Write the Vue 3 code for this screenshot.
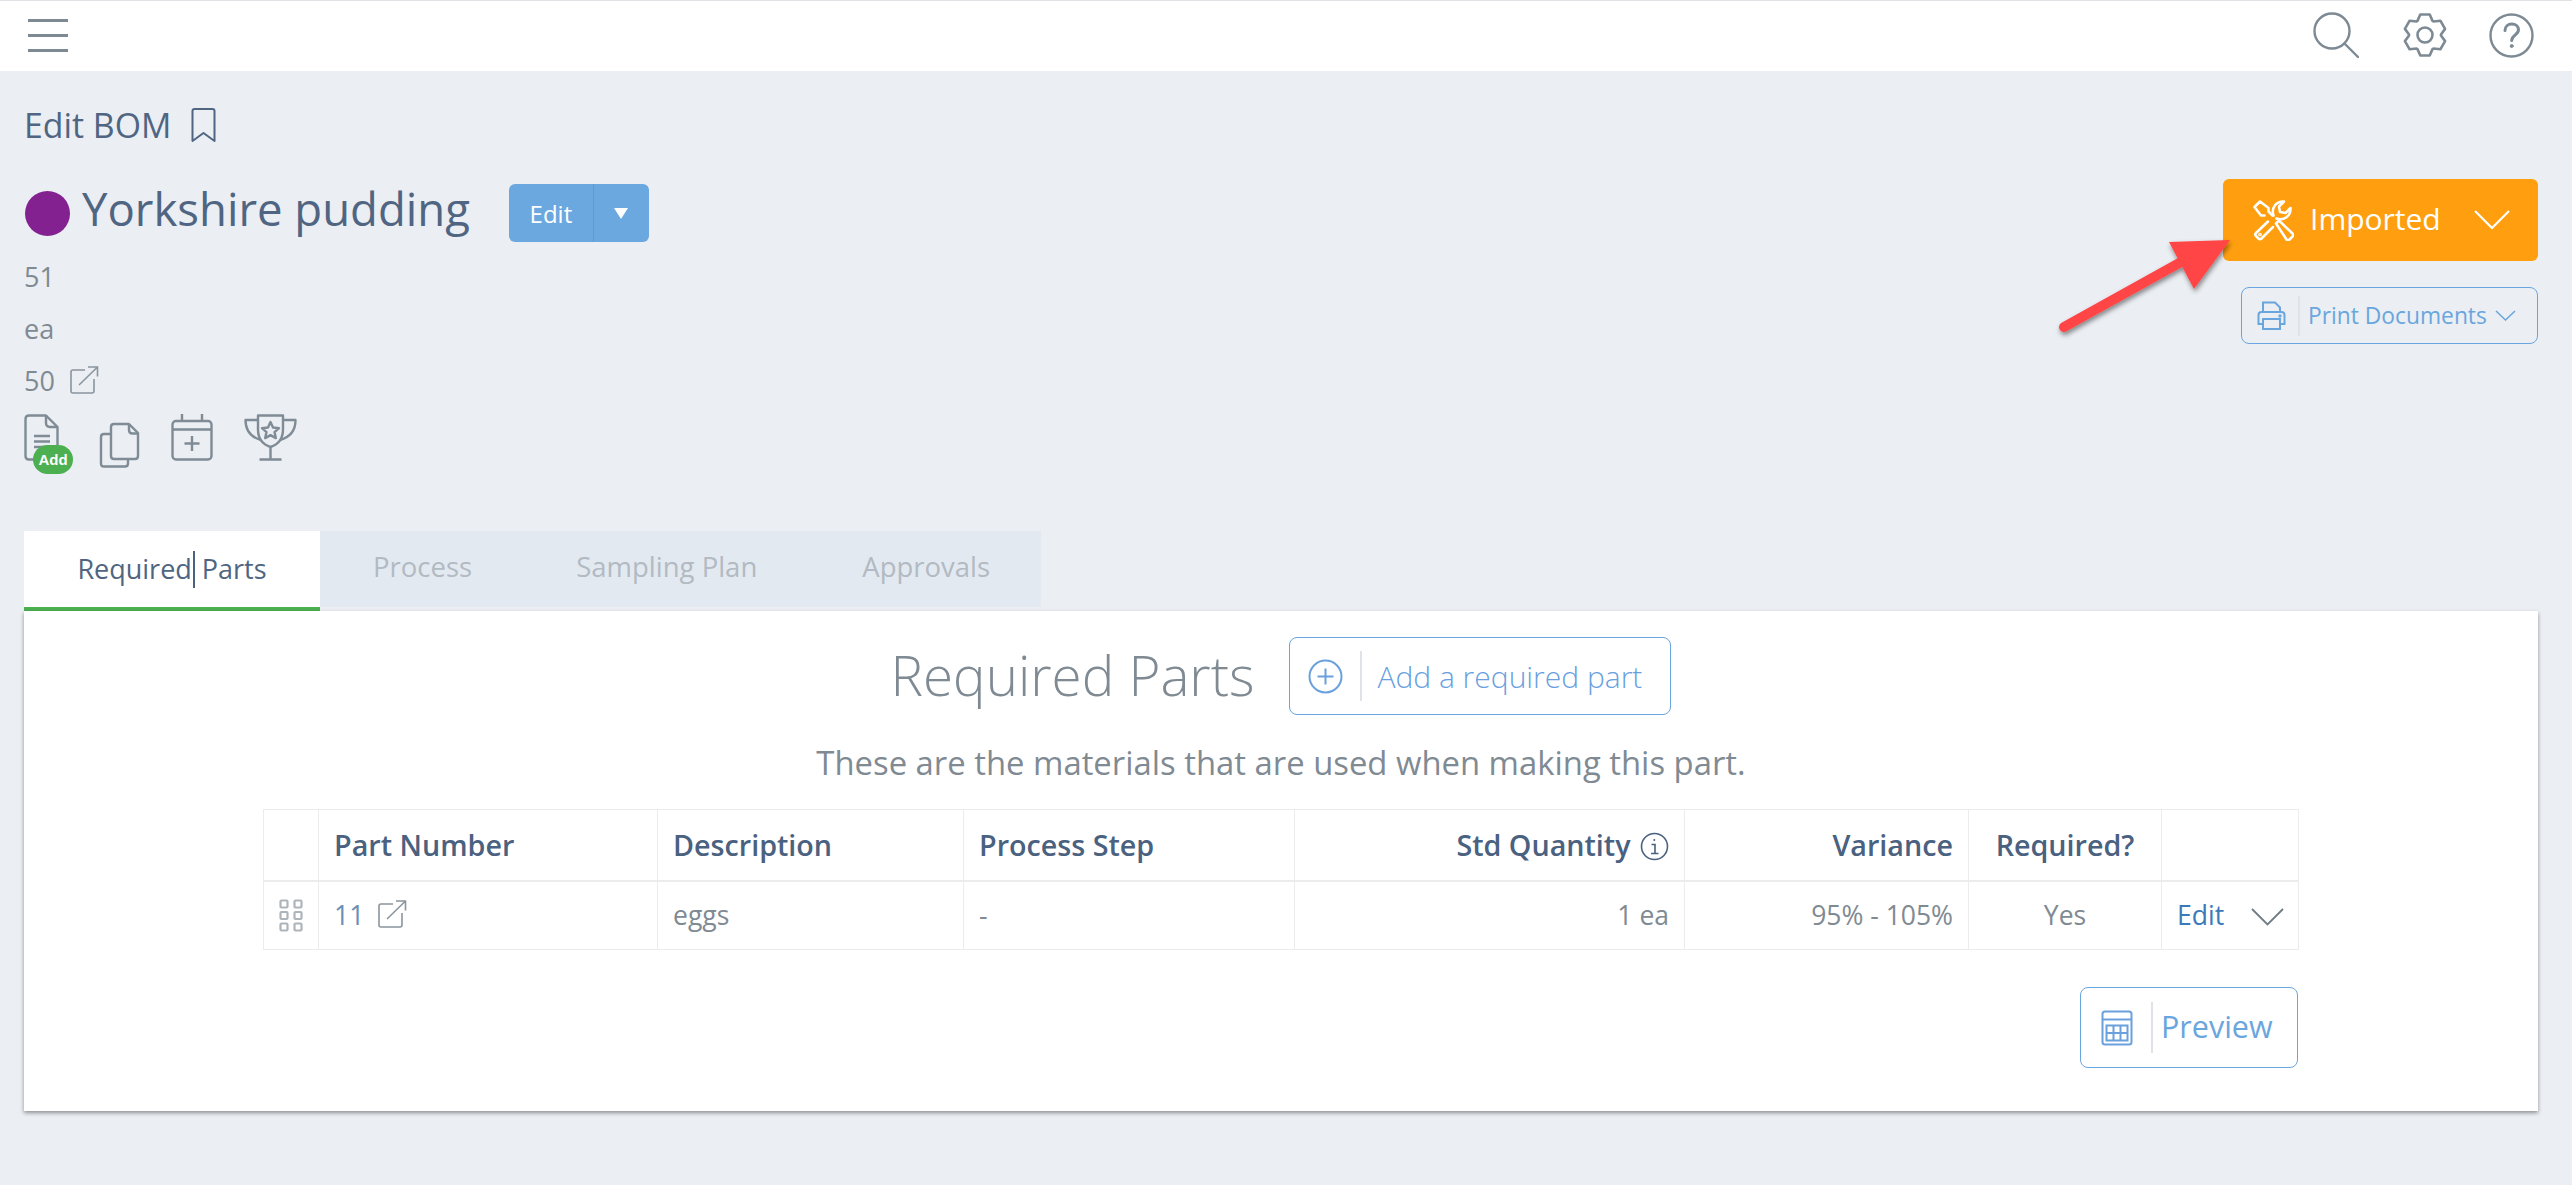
<script setup>
const gear = (() => {
  const c = 22, pts = []
  for (let i = 0; i < 6; i++) {
    const a = (i * 60 - 90) * Math.PI / 180
    const p = (r, d) => {
      const t = a + d * Math.PI / 180
      return `${(c + r * Math.cos(t)).toFixed(2)} ${(c + r * Math.sin(t)).toFixed(2)}`
    }
    pts.push(p(16, -28), p(21, -13), p(21, 13), p(16, 28))
  }
  return 'M' + pts.join('L') + 'Z'
})()
const headers = [
  { text: 'Part Number', cls: '' },
  { text: 'Description', cls: '' },
  { text: 'Process Step', cls: '' }
]
</script>

<template>
  <div class="page">
    <header class="topbar">
      <div class="burger"><span></span><span></span><span></span></div>
      <div class="top-icons">
        <svg class="ti" width="46" height="46" viewBox="0 0 46 46" fill="none" stroke="#7d8a94" stroke-width="2.4" stroke-linecap="round">
          <circle cx="19" cy="19" r="17.5" />
          <path d="M31.5 31.5L45 45" />
        </svg>
        <svg class="ti" width="44" height="44" viewBox="0 0 44 44" fill="none" stroke="#7d8a94" stroke-width="2.6" stroke-linejoin="round">
          <path :d="gear" />
          <circle cx="22" cy="22" r="7.5" />
        </svg>
        <svg class="ti" width="45" height="45" viewBox="0 0 45 45" fill="none" stroke="#7d8a94" stroke-width="2.4" stroke-linecap="round">
          <circle cx="22.5" cy="22.5" r="21" />
          <path d="M16 17.5c0-4 3-6.500 6.800-6.500 3.800 0 6.700 2.400 6.700 5.800 0 5-6.800 5.200-6.800 10.700" stroke-width="3" />
          <circle cx="22.700" cy="33" r="1.500" fill="#7d8a94" stroke-width="1" />
        </svg>
      </div>
    </header>

    <section class="top">
      <div class="left">
        <div class="crumb">
          <span>Edit BOM</span>
          <svg width="25" height="35" viewBox="0 0 25 35" fill="none" stroke="#4f6582" stroke-width="2">
            <path d="M1.500 33V3q0-2 2-2h18q2 0 2 2v30l-11-8z" stroke-linejoin="round" />
          </svg>
        </div>
        <div class="title-row">
          <span class="dot"></span>
          <h1>Yorkshire pudding</h1>
          <div class="split">
            <span class="split-main">Edit</span>
            <span class="split-caret"><i></i></span>
          </div>
        </div>
        <div class="meta first">51</div>
        <div class="meta">ea</div>
        <div class="meta">
          50
          <svg class="ext" width="29" height="28" viewBox="0 0 29 28" fill="none" stroke="#8a959e" stroke-width="1.600">
            <path d="M15 4H3q-2 0-2 2v19q0 2 2 2h19q2 0 2-2V13" />
            <path d="M9 19L27.500 1M18 1h9.500v9.500" />
          </svg>
        </div>
        <div class="actions">
          <div class="doc-wrap">
            <svg width="36" height="47" viewBox="0 0 36 47" fill="none" stroke="#7f8b95" stroke-width="2.400" stroke-linejoin="round">
              <path d="M22 1.500H5q-3.500 0-3.500 3.500v37q0 3.500 3.500 3.500h25q3.500 0 3.500-3.500V13z" />
              <path d="M22 1.500V9q0 4 4 4h7.500" />
              <path d="M10 22h16M10 27.500h16M10 33h16" />
            </svg>
            <span class="add">Add</span>
          </div>
          <svg class="copy" width="42" height="46" viewBox="0 0 42 46" fill="none" stroke="#7f8b95" stroke-width="2.400" stroke-linejoin="round">
            <path d="M29 37v4.500q0 3-3 3H5q-3 0-3-3V15q0-3 3-3h7" />
            <path d="M30 2H15q-3 0-3 3v29q0 3 3 3h21q3 0 3-3V11z" />
            <path d="M30 2v6q0 3.500 3.500 3.500H39" />
          </svg>
          <svg class="cal" width="42" height="47" viewBox="0 0 42 47" fill="none" stroke="#7f8b95" stroke-width="2.400" stroke-linejoin="round">
            <rect x="1.500" y="7" width="39" height="38.500" rx="3.500" />
            <path d="M1.500 15.500h39M11 0v7M31 0v7M21 22v15M13.500 29.500h15" />
          </svg>
          <svg class="trophy" width="53" height="47" viewBox="0 0 53 47" fill="none" stroke="#7f8b95" stroke-width="2.400" stroke-linejoin="round">
            <path d="M14 1.500h25v14c0 9-5 15-12.500 17.500C19 30.500 14 24.500 14 15.500z" />
            <path d="M14 6H1.500c0 11 5 17 15.500 20M39 6h12.500c0 11-5 17-15.500 20" />
            <path d="M26.500 33v13M15.500 45.500h22" />
            <path d="M26.500 8l2.500 5.500 6 .6-4.500 4 1.300 6-5.300-3-5.300 3 1.300-6-4.500-4 6-.6z" />
          </svg>
        </div>
      </div>

      <div class="right">
        <button class="status">
          <svg width="41" height="41" viewBox="0 0 41 41" fill="none" stroke="#fff" stroke-width="2.500" stroke-linejoin="round" stroke-linecap="round">
            <path d="M1.500 7L7 1.500l8.500 6.500v3.500l4 4M11.500 15.500H8L1.500 7" />
            <path d="M23 23.500l3-3 13.500 13q1.500 1.500 0 3l-3 3q-1.500 1.500-3 0z" />
            <path d="M15 21.500L3 33q-1.500 1.500 0 3l2.500 2.500q1.500 1.500 3 0L20 27" />
            <path d="M20.500 15.500C18 8 23 1 31 1.500l-5 5 1 5.500 5.500 1 5-5c.5 8-6.500 13-14 10.500" />
            <circle cx="7" cy="34.500" r=".6" fill="#fff" />
          </svg>
          <span class="status-text">Imported</span>
          <svg class="status-chev" width="36" height="20" viewBox="0 0 36 20" fill="none" stroke="#fff" stroke-width="2.200">
            <path d="M1 1l17 17L35 1" />
          </svg>
        </button>
        <button class="outline print">
          <svg width="29" height="29" viewBox="0 0 29 29" fill="none" stroke="#6aa6de" stroke-width="2">
            <path d="M6 12V1.500h12l5 5V12" />
            <path d="M6 23H1.500V14q0-3 3-3h20q3 0 3 3v9H23" />
            <path d="M6 18h17v10H6z" />
            <circle cx="23" cy="15" r=".7" fill="#6aa6de" />
          </svg>
          <span class="sep"></span>
          <span>Print Documents</span>
          <svg class="print-chev" width="21" height="11" viewBox="0 0 21 11" fill="none" stroke="#6aa6de" stroke-width="1.500">
            <path d="M1 1l9.500 9L20 1" />
          </svg>
        </button>
      </div>
    </section>

    <nav class="tabs">
      <div class="tab active">Required<i class="caret"></i> Parts</div>
      <div class="rest">
        <span class="t1">Process</span>
        <span class="t2">Sampling Plan</span>
        <span class="t3">Approvals</span>
      </div>
    </nav>

    <main class="card">
      <div class="card-head">
        <h2>Required Parts</h2>
        <button class="outline addpart">
          <svg width="35" height="35" viewBox="0 0 35 35" fill="none" stroke="#6aa0dc" stroke-width="2">
            <circle cx="17.500" cy="17.500" r="16" />
            <path d="M17.500 9.500v16M9.500 17.500h16" />
          </svg>
          <span class="sep"></span>
          <span>Add a required part</span>
        </button>
      </div>
      <p class="sub">These are the materials that are used when making this part.</p>

      <table class="grid">
        <colgroup>
          <col style="width:55px" />
          <col style="width:339px" />
          <col style="width:306px" />
          <col style="width:331px" />
          <col style="width:390px" />
          <col style="width:284px" />
          <col style="width:193px" />
          <col style="width:137px" />
        </colgroup>
        <thead>
          <tr>
            <th></th>
            <th v-for="h in headers" :key="h.text">{{ h.text }}</th>
            <th class="r">
              Std Quantity
              <svg class="info" width="29" height="29" viewBox="0 0 29 29" fill="none" stroke="#4a6180" stroke-width="1.600">
                <circle cx="14.500" cy="14.500" r="13" />
                <path d="M11.500 12.500h3.500v9M11 21.500h7.500" />
                <circle cx="14.300" cy="8" r="1" fill="#4a6180" stroke="none" />
              </svg>
            </th>
            <th class="r">Variance</th>
            <th class="c">Required?</th>
            <th></th>
          </tr>
        </thead>
        <tbody>
          <tr>
            <td class="drag">
              <svg width="24" height="33" viewBox="0 0 24 33" fill="none" stroke="#aeb5ba" stroke-width="2.200">
                <rect x="1.500" y="1.500" width="7" height="7" rx="1" />
                <rect x="15.500" y="1.500" width="7" height="7" rx="1" />
                <rect x="1.500" y="13" width="7" height="7" rx="1" />
                <rect x="15.500" y="13" width="7" height="7" rx="1" />
                <rect x="1.500" y="24.500" width="7" height="7" rx="1" />
                <rect x="15.500" y="24.500" width="7" height="7" rx="1" />
              </svg>
            </td>
            <td>
              <span class="num">11</span>
              <svg class="ext" width="29" height="28" viewBox="0 0 29 28" fill="none" stroke="#8a959e" stroke-width="1.600">
                <path d="M15 4H3q-2 0-2 2v19q0 2 2 2h19q2 0 2-2V13" />
                <path d="M9 19L27.500 1M18 1h9.500v9.500" />
              </svg>
            </td>
            <td>eggs</td>
            <td>-</td>
            <td class="r">1 ea</td>
            <td class="r">95% - 105%</td>
            <td class="c">Yes</td>
            <td class="edit">
              <a>Edit</a>
              <svg width="33" height="18" viewBox="0 0 33 18" fill="none" stroke="#6f7b85" stroke-width="1.800">
                <path d="M1 1l15.500 15.500L32 1" />
              </svg>
            </td>
          </tr>
        </tbody>
      </table>

      <div class="foot">
        <button class="outline preview">
          <svg width="32" height="36" viewBox="0 0 32 36" fill="none" stroke="#6aa0dc" stroke-width="2">
            <rect x="1.500" y="1.500" width="29" height="33" rx="2.500" />
            <path d="M1.500 9.500h29" />
            <path d="M5.500 15.500h21v15h-21zM5.500 23h21M12.500 15.500v15M19.500 15.500v15" />
          </svg>
          <span class="sep"></span>
          <span>Preview</span>
        </button>
      </div>
    </main>

    <svg class="arrow" width="190" height="110" viewBox="2055 230 190 110">
      <defs>
        <filter id="as" x="-20%" y="-20%" width="140%" height="150%">
          <feDropShadow dx="1" dy="3" stdDeviation="2.500" flood-color="#000" flood-opacity=".45" />
        </filter>
      </defs>
      <g filter="url(#as)" fill="#ff4444" stroke="none">
        <path d="M2064 327L2181 262" stroke="#ff4444" stroke-width="10" stroke-linecap="round" />
        <path d="M2169 242L2230 240L2194 289Z" />
      </g>
    </svg>
  </div>
</template>

<style scoped>
.page {
  position: relative;
  min-height: 1185px;
  background: #ebeef3;
  font-family: "Open Sans", "Noto Sans", sans-serif;
  color: #7f8a93;
  overflow: hidden;
}
.topbar {
  height: 71px;
  box-sizing: border-box;
  border-top: 1px solid #dfe1e4;
  background: #fff;
  display: flex;
  align-items: center;
  justify-content: space-between;
  padding: 0 38px 0 28px;
}
.burger {
  width: 40px;
  display: flex;
  flex-direction: column;
  gap: 12px;
  margin-top: -2px;
}
.burger span {
  height: 3px;
  background: #7d8a94;
}
.top-icons {
  display: flex;
  align-items: center;
  gap: 42px;
  margin-top: -2px;
}
.ti:first-child { margin-right: 2px; }
.top {
  display: flex;
  justify-content: space-between;
  height: 460px;
  padding: 0 34px 0 24px;
}
.crumb {
  height: 40px;
  margin-top: 34px;
  display: flex;
  align-items: center;
  gap: 20px;
  font-size: 33.800px;
  line-height: 40px;
  font-weight: 400;
  color: #4f6582;
}
.title-row {
  display: flex;
  align-items: center;
  height: 58px;
  margin-top: 39px;
  margin-left: 1px;
}
.dot {
  width: 45px;
  height: 45px;
  border-radius: 50%;
  background: #832191;
}
h1 {
  margin: -10px 0 0 12px;
  font-size: 45.500px;
  line-height: 58px;
  font-weight: 400;
  color: #4f6582;
}
.split {
  display: flex;
  width: 140px;
  height: 58px;
  margin-left: 39px;
  border-radius: 6px;
  overflow: hidden;
  background: #6ca8e0;
  color: #fff;
  font-size: 24px;
}
.split-main {
  width: 84px;
  display: flex;
  align-items: center;
  justify-content: center;
  border-right: 1px solid #5f9cd6;
}
.split-caret {
  flex: 1;
  display: flex;
  align-items: center;
  justify-content: center;
}
.split-caret i {
  width: 0;
  height: 0;
  border-left: 7px solid transparent;
  border-right: 7px solid transparent;
  border-top: 11px solid #fff;
}
.meta {
  height: 52px;
  display: flex;
  align-items: center;
  gap: 15px;
  font-size: 27px;
  font-weight: 400;
  color: #7f8a93;
}
.meta.first {
  margin-top: 8px;
}
.actions {
  display: flex;
  align-items: flex-start;
  margin-top: 8px;
}
.doc-wrap {
  position: relative;
  width: 36px;
  height: 47px;
}
.add {
  position: absolute;
  left: 9px;
  top: 31px;
  width: 40px;
  height: 29px;
  border-radius: 15px;
  background: #4caf50;
  color: #fff;
  font-family: "Liberation Sans", sans-serif;
  font-size: 15px;
  font-weight: 700;
  line-height: 29px;
  text-align: center;
}
.copy { margin: 8px 0 0 39px; }
.cal { margin-left: 30px; }
.trophy { margin-left: 31px; }
.right {
  display: flex;
  flex-direction: column;
  align-items: flex-end;
  padding-top: 108px;
  gap: 26px;
}
button {
  font-family: inherit;
  cursor: pointer;
}
.status {
  width: 315px;
  height: 82px;
  border: 0;
  border-radius: 6px;
  background: #ff9f10;
  color: #fff;
  display: flex;
  align-items: center;
  padding: 0 0 0 30px;
}
.status-text {
  margin: -4px 0 0 16px;
  font-size: 30px;
  font-weight: 400;
}
.status-chev { margin-left: 33px; }
.outline {
  display: flex;
  align-items: center;
  box-sizing: border-box;
  border: 1.500px solid #6aa6de;
  border-radius: 8px;
  background: transparent;
  color: #6aa6de;
  font-weight: 300;
  padding: 0;
}
.sep {
  width: 2px;
  background: #dfe3e7;
}
.print {
  width: 297px;
  height: 57px;
  font-size: 22.800px;
  padding-left: 15px;
  font-weight: 400;
}
.print .sep { height: 40px; margin: 0 8px 0 12px; }
.print-chev { margin-left: 8px; }
.tabs {
  display: flex;
  height: 80px;
  margin: 0 34px 0 24px;
}
.tab {
  width: 296px;
  box-sizing: border-box;
  background: #fff;
  text-align: center;
  font-size: 27px;
  font-weight: 400;
  color: #4f6582;
  line-height: 76px;
  border-bottom: 4px solid #4caf50;
  position: relative;
}
.caret {
  display: inline-block;
  width: 2px;
  height: 37px;
  margin-left: 1px;
  margin-right: 0;
  background: #4a6180;
  vertical-align: -9px;
}
.rest {
  width: 721px;
  height: 78px;
  box-sizing: border-box;
  background: #e3e9f1;
  border-bottom: 2px solid #eceff3;
  display: flex;
  font-size: 27.500px;
  font-weight: 400;
  color: #b2bac2;
  line-height: 72px;
}
.t1 { margin-left: 53px; }
.t2 { margin-left: 104px; }
.t3 { margin-left: 105px; }
.card {
  margin: 0 34px 0 24px;
  height: 500px;
  box-sizing: border-box;
  background: #fff;
  box-shadow: 0 2px 4px rgba(0, 0, 0, .4);
  position: relative;
  padding-top: 26px;
}
.card-head {
  display: flex;
  justify-content: center;
  align-items: center;
  height: 78px;
}
h2 {
  margin: 0 35px 0 0;
  font-size: 54.700px;
  font-weight: 300;
  color: #7f8a93;
  line-height: 78px;
  position: relative;
  top: -1px;
}
.addpart {
  width: 382px;
  height: 78px;
  font-size: 30px;
  padding-left: 18px;
  color: #6a9fdf;
}
.addpart .sep { height: 50px; margin: 0 15px 0 17px; }
.sub {
  margin: 28px 0 0;
  text-align: center;
  font-size: 32.850px;
  line-height: 40px;
  font-weight: 400;
  color: #7f8a93;
}
.grid {
  width: 2035px;
  margin: 26px 0 0 239px;
  border-collapse: collapse;
  table-layout: fixed;
  font-size: 26.500px;
  white-space: nowrap;
}
.grid th, .grid td {
  border: 1.500px solid #ececec;
  padding: 0 15px;
  text-align: left;
  box-sizing: border-box;
}
.grid th {
  height: 71px;
  color: #4a6180;
  font-size: 28.700px;
  font-weight: 600;
  border-bottom-width: 2px;
}
.grid td {
  height: 69px;
  color: #7f8a93;
  font-weight: 400;
}
.grid .r { text-align: right; }
.grid .c { text-align: center; }
.info { vertical-align: -5px; margin-left: 2px; }
.drag { padding: 0 !important; text-align: center !important; }
.drag svg { display: block; margin: 0 auto; }
.num { color: #6b8fb5; margin-right: 14px; }
.grid .ext { vertical-align: -3px; }
.grid .edit { padding-right: 0; }
.edit a { color: #3a7ab8; font-weight: 400; }
.edit svg { margin-left: 27px; vertical-align: -1px; }
.foot {
  display: flex;
  justify-content: flex-end;
  width: 2035px;
  margin: 37px 0 0 239px;
}
.preview {
  width: 218px;
  height: 81px;
  font-size: 30.500px;
  font-weight: 400;
  padding-left: 20px;
}
.preview .sep { height: 51px; margin: 0 8px 0 18px; }
.preview span:last-child { margin-top: -3px; }
.arrow {
  position: absolute;
  left: 2055px;
  top: 230px;
  pointer-events: none;
}
</style>
